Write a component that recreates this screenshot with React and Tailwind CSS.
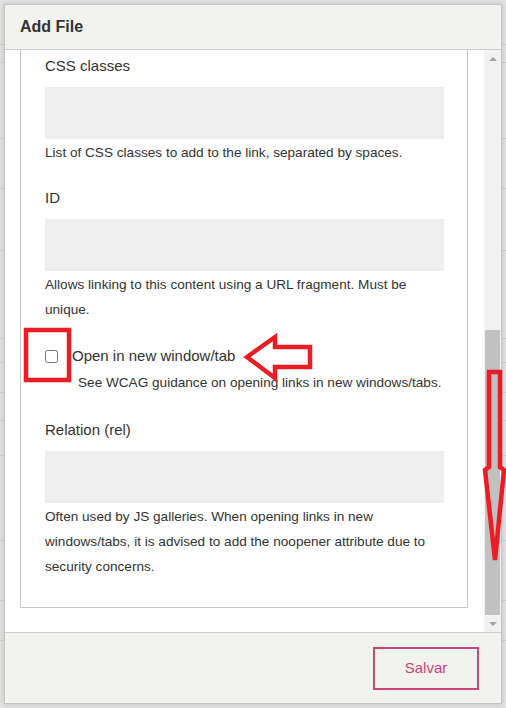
import React from 'react';

const labelCls = "text-[15px] leading-[20px] text-[#333]";
const helpCls = "text-[13.6px] leading-[25px] text-[#333]";

function BackgroundPage() {
  // the page behind the dialog, greyed out
  const rows = [44, 62, 138, 188, 250, 338, 362, 392, 420, 455, 540, 600, 640];
  return (
    <div className="absolute inset-0 bg-[#e2e2e2]">
      {rows.map((y, i) => (
        <div key={i} className="absolute left-0 right-0 border-t border-[#cfcfcf]" style={{ top: y }} />
      ))}
    </div>
  );
}

function Scrollbar() {
  return (
    <div className="w-[17px] shrink-0 flex flex-col bg-[#f1f1f1]">
      <div className="h-[17px] flex items-center justify-center">
        <div className="w-0 h-0 border-x-[4px] border-x-transparent border-b-[4px] border-b-[#a3a3a3]" />
      </div>
      <div className="flex-1 flex flex-col justify-end px-[1px]">
        <div className="h-[285px] bg-[#c1c1c1]" />
      </div>
      <div className="h-[17px] flex items-center justify-center">
        <div className="w-0 h-0 border-x-[4px] border-x-transparent border-t-[4px] border-t-[#a3a3a3]" />
      </div>
    </div>
  );
}

function Field({ label, help, first }) {
  return (
    <div className={first ? "pt-[6px]" : "pt-[23px]"}>
      <div className={labelCls}>{label}</div>
      <div className="mt-[11px] h-[52px] w-[399px] bg-[#eeeeee]" />
      <p className={`${helpCls} mt-[1px]`}>{help}</p>
    </div>
  );
}

function Annotations() {
  return (
    <svg className="absolute inset-0 pointer-events-none" width="506" height="708" viewBox="0 0 506 708">
      <rect x="26" y="330" width="43" height="50" fill="none" stroke="#ec1c24" strokeWidth="4.5" />
      <polygon
        points="247,357 275,337 275,347 310,347 310,367 275,367 275,378"
        fill="none"
        stroke="#ec1c24"
        strokeWidth="4.5"
        strokeLinejoin="miter"
      />
      <polygon
        points="489,372 500,372 500,467 504,470 495,560 485,470 489,467"
        fill="none"
        stroke="#ec1c24"
        strokeWidth="4.5"
        strokeLinejoin="miter"
      />
    </svg>
  );
}

export default function App() {
  return (
    <div className="relative w-[506px] h-[708px] overflow-hidden font-['Liberation_Sans',Arial,sans-serif] text-[#333]">
      <BackgroundPage />

      <div className="absolute left-[4px] top-[4px] w-[498px] h-[700px] flex flex-col bg-white border border-[#c4c4c4] shadow-[0_0_6px_rgba(0,0,0,0.15)]">
        <header className="h-[45px] shrink-0 flex items-center px-[15px] bg-[#f2f2ee] border-b border-[#cfcfcf]">
          <h1 className="text-[16px] font-bold text-[#333]">Add File</h1>
        </header>

        <div className="flex-1 flex min-h-0">
          <div className="flex-1 overflow-hidden pl-[15px] pr-[16px]">
            <div className="border-x border-b border-[#c8c8c8] pl-[24px] pr-[24px] pb-[28px]">
              <Field
                first
                label="CSS classes"
                help="List of CSS classes to add to the link, separated by spaces."
              />
              <Field
                label="ID"
                help="Allows linking to this content using a URL fragment. Must be unique."
              />

              <div className="pt-[24px]">
                <label className="flex items-center h-[20px]">
                  <input type="checkbox" className="w-[13px] h-[13px] m-0" />
                  <span className={`${labelCls} ml-[14px]`}>Open in new window/tab</span>
                </label>
                <p className={`${helpCls} mt-[4px] pl-[33px]`}>
                  See WCAG guidance on opening links in new windows/tabs.
                </p>
              </div>

              <div className="pt-[25px]">
                <div className={labelCls}>Relation (rel)</div>
                <div className="mt-[11px] h-[52px] w-[399px] bg-[#eeeeee]" />
                <p className={`${helpCls} mt-[1px]`}>
                  Often used by JS galleries. When opening links in new windows/tabs, it is advised to add the noopener attribute due to security concerns.
                </p>
              </div>
            </div>
          </div>
          <Scrollbar />
        </div>

        <footer className="h-[71px] shrink-0 flex justify-end items-start pt-[14px] pr-[22px] bg-[#f2f2ee] border-t border-[#cfcfcf]">
          <button className="w-[106px] h-[43px] border-2 border-[#c8467a] text-[#c8467a] text-[15px] bg-transparent">
            Salvar
          </button>
        </footer>
      </div>

      <Annotations />
    </div>
  );
}
